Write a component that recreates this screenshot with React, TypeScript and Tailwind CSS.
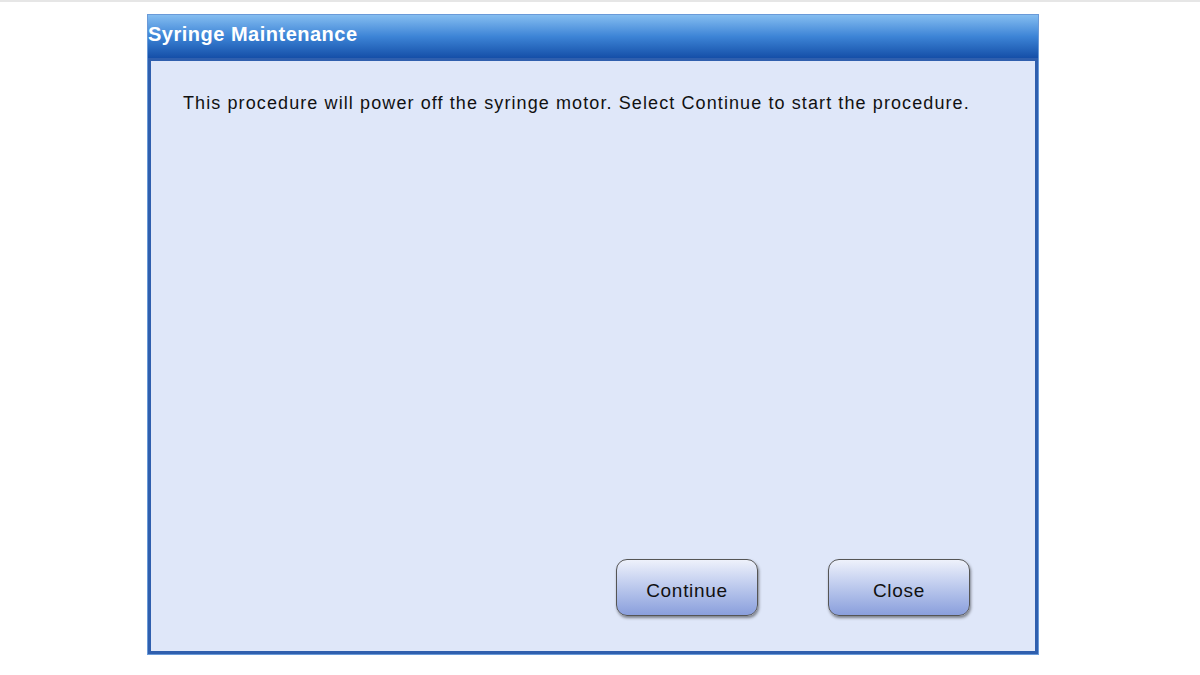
export default function App() {
  return (
    <div className="w-[1200px] h-[675px] bg-white relative overflow-hidden" style={{ fontFamily: '"Liberation Sans", Arial, sans-serif' }}>
      <div className="h-[2px] bg-[#e6e6e6]" />
      <div className="pt-[12px] pl-[147px]">
        <div className="w-[892px] h-[641px] flex flex-col border border-[#6a9ad8]">
          <div className="h-[43px] flex items-center bg-gradient-to-b from-[#84bdf0] via-[#3d84d6] to-[#154fa8]">
            <span className="text-white font-bold text-[20px] tracking-[0.5px] leading-none -mt-[6px]">Syringe Maintenance</span>
          </div>
          <div className="flex-1 bg-[#dfe7f9] border-[3px] border-[#2f5fae] flex flex-col">
            <p className="text-[18px] tracking-[1.1px] text-[#111] pl-[32px] pt-[33px] leading-none whitespace-nowrap">
              This procedure will power off the syringe motor. Select Continue to start the procedure.
            </p>
            <div className="flex-1" />
            <div className="flex gap-[70px] pl-[465px] pb-[35px]">
              <button className="w-[142px] h-[57px] rounded-[11px] border border-[#555] bg-gradient-to-b from-[#eef1fb] to-[#8a9fdc] shadow-[1px_2px_3px_rgba(0,0,0,0.45)] text-[19px] tracking-[0.7px] text-[#111] pt-[7px]">
                Continue
              </button>
              <button className="w-[142px] h-[57px] rounded-[11px] border border-[#555] bg-gradient-to-b from-[#eef1fb] to-[#8a9fdc] shadow-[1px_2px_3px_rgba(0,0,0,0.45)] text-[19px] tracking-[0.7px] text-[#111] pt-[7px]">
                Close
              </button>
            </div>
          </div>
        </div>
      </div>
    </div>
  );
}
